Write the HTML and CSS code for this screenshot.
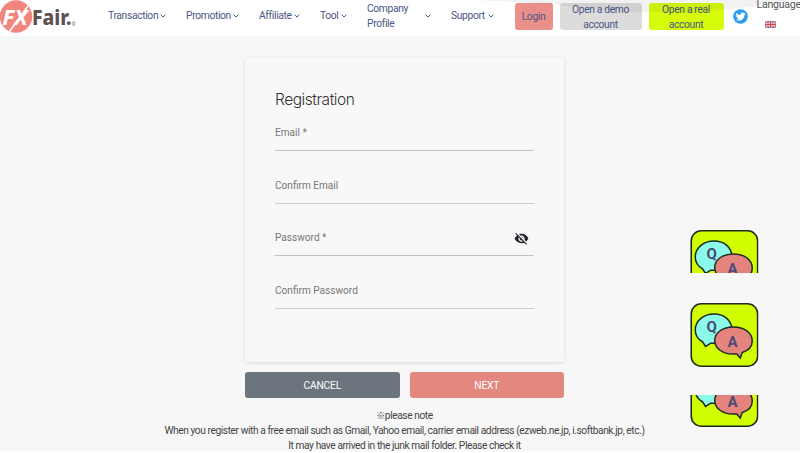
FILE: index.html
```
<!DOCTYPE html>
<html lang="en">
<head>
    <meta charset="UTF-8">
    <meta name="viewport" content="width=device-width, initial-scale=1.0">
    <title>Registration</title>
    <link rel="stylesheet" href="styles.css">
</head>
<body>
    <!-- shared icons -->
    <svg class="icon-defs" width="0" height="0">
        <symbol id="chevron" viewBox="0 0 6 4">
            <path d="M0.6 0.7 L3 3 L5.4 0.7" fill="none" stroke="currentColor" stroke-width="1"/>
        </symbol>
        <symbol id="qa" viewBox="0 0 68 64">
            <rect x="1" y="0.8" width="66.4" height="62.4" rx="10" fill="#d0fd00" stroke="#202b20" stroke-width="1.6"/>
            <path d="M24 11 C13 11 5 18 5 27 C5 32 8 36.5 12.5 39 L15.3 43.5 L20.5 40.2 C33 41 41.5 35 41.5 26.5 C41.5 17.5 34 11 24 11 Z" fill="#8cfae8" stroke="#202b28" stroke-width="1.5"/>
            <path d="M43 24 C32.5 24 24.5 29.5 24.5 37.5 C24.5 45.5 32.5 51 42.5 51 L46.5 51 L50 55 L52 49.5 C58.5 47.5 62 43.5 62 38 C62 29.8 54 24 43 24 Z" fill="#e5837d" stroke="#202b28" stroke-width="1.5"/>
            <text x="21.3" y="28.8" text-anchor="middle" class="qa-letter">Q</text>
            <text x="42.3" y="43.6" text-anchor="middle" class="qa-letter">A</text>
        </symbol>
    </svg>

    <header class="header">
        <svg class="logo" viewBox="0 0 78 33">
            <circle cx="16" cy="16.5" r="16.2" fill="#f3857f"/>
            <path d="M9.5 31.5 L28 6" fill="none" stroke="#fff" stroke-width="1.6"/>
            <text x="2.5" y="24.5" class="logo-fx" textLength="25" lengthAdjust="spacingAndGlyphs">FX</text>
            <text x="32" y="25" class="logo-fair" textLength="39.5" lengthAdjust="spacingAndGlyphs">Fair.</text>
            <text x="71.8" y="25.5" class="logo-copy">©</text>
        </svg>
        <nav class="nav">
            <a class="nav-item">Transaction <svg class="chevron"><use href="#chevron"/></svg></a>
            <a class="nav-item">Promotion <svg class="chevron"><use href="#chevron"/></svg></a>
            <a class="nav-item">Affiliate <svg class="chevron"><use href="#chevron"/></svg></a>
            <a class="nav-item">Tool <svg class="chevron"><use href="#chevron"/></svg></a>
            <a class="nav-item">Company<br>Profile <svg class="chevron"><use href="#chevron"/></svg></a>
            <a class="nav-item">Support <svg class="chevron"><use href="#chevron"/></svg></a>
        </nav>
        <div class="actions">
            <a class="btn btn-login">Login</a>
            <a class="btn btn-demo">Open a demo<br>account</a>
            <a class="btn btn-real">Open a real<br>account</a>
        </div>
        <svg class="twitter" viewBox="0 0 15 15">
            <circle cx="7.5" cy="7.5" r="7.3" fill="#2c9eed"/>
            <path transform="translate(2.7 2.7) scale(0.41)" fill="#fff" d="M23.95 4.57a10 10 0 0 1-2.82.77 4.96 4.96 0 0 0 2.16-2.72c-.95.55-2 .95-3.13 1.18a4.92 4.92 0 0 0-8.38 4.48A13.93 13.93 0 0 1 1.64 3.16a4.92 4.92 0 0 0 1.52 6.57 4.9 4.9 0 0 1-2.23-.61v.06a4.92 4.92 0 0 0 3.95 4.83 5 5 0 0 1-2.21.08 4.94 4.94 0 0 0 4.6 3.42A9.87 9.87 0 0 1 0 19.54a13.99 13.99 0 0 0 7.55 2.21c9.06 0 14-7.5 14-13.98l-.02-.63a9.94 9.94 0 0 0 2.42-2.57z"/>
        </svg>
        <div class="language">
            <span>Language</span>
            <svg class="flag" viewBox="0 0 11 7">
                <rect width="11" height="7" fill="#4c568f"/>
                <path d="M0 0 L11 7 M11 0 L0 7" stroke="#f1dce2" stroke-width="1.6"/>
                <path d="M0 0 L11 7 M11 0 L0 7" stroke="#d6505b" stroke-width="0.7"/>
                <path d="M5.5 0 V7 M0 3.5 H11" stroke="#f5e8eb" stroke-width="2.4"/>
                <path d="M5.5 0 V7 M0 3.5 H11" stroke="#d6434f" stroke-width="1.3"/>
            </svg>
        </div>
        <svg class="header-shade" viewBox="0 0 330 13">
            <path d="M0 0 H330 C290 5 263 12 185 12.5 C125 12 90 2 0 0 Z" fill="#000" fill-opacity="0.05"/>
        </svg>
    </header>

    <main class="main">
        <form class="card">
            <h2 class="title">Registration</h2>
            <div class="field"><label>Email *</label></div>
            <div class="field field-soft"><label>Confirm Email</label></div>
            <div class="field">
                <label>Password *</label>
                <svg class="eye" viewBox="0 0 24 24"><path fill="#212529" d="M12 7c2.76 0 5 2.24 5 5 0 .65-.13 1.26-.36 1.83l2.92 2.92c1.51-1.26 2.7-2.89 3.43-4.75-1.73-4.39-6-7.5-11-7.5-1.4 0-2.74.25-3.98.7l2.16 2.16C10.74 7.13 11.35 7 12 7zM2 4.27l2.28 2.28.46.46C3.08 8.3 1.78 10.02 1 12c1.73 4.39 6 7.5 11 7.5 1.55 0 3.03-.3 4.38-.84l.42.42L19.73 22 21 20.73 3.27 3 2 4.27zM7.53 9.8l1.55 1.55c-.05.21-.08.43-.08.65 0 1.66 1.34 3 3 3 .22 0 .44-.03.65-.08l1.55 1.55c-.67.33-1.41.53-2.2.53-2.76 0-5-2.24-5-5 0-.79.2-1.53.53-2.2zm4.31-.78l3.15 3.15.02-.16c0-1.66-1.34-3-3-3l-.17.01z"/></svg>
            </div>
            <div class="field field-soft"><label>Confirm Password</label></div>
        </form>
        <div class="form-buttons">
            <button type="button" class="form-btn cancel">CANCEL</button>
            <button type="button" class="form-btn next">NEXT</button>
        </div>
        <p class="note"><span class="note-mark">※</span>please note<br>When you register with a free email such as Gmail, Yahoo email, carrier email address (ezweb.ne.jp, i.softbank.jp, etc.)<br>It may have arrived in the junk mail folder. Please check it</p>
    </main>

    <!-- floating Q&A shortcuts -->
    <aside class="qa-list">
        <div class="qa qa-top"><svg class="qa-icon"><use href="#qa"/></svg></div>
        <div class="qa"><svg class="qa-icon"><use href="#qa"/></svg></div>
        <div class="qa qa-bottom"><svg class="qa-icon"><use href="#qa"/></svg></div>
    </aside>
</body>
</html>
```
FILE: styles.css
```
* {
    box-sizing: border-box;
}

body {
    margin: 0;
    height: 453px;
    overflow: hidden;
    background-color: #fff;
    font-family: Roboto, "Noto Sans CJK JP", sans-serif;
    font-size: 10.3px;
    line-height: 15px;
    letter-spacing: -0.35px;
    color: #444;
}

svg {
    display: block;
    flex: none;
}

.icon-defs {
    position: absolute;
}

/* Header */
.header {
    position: relative;
    display: flex;
    align-items: flex-start;
    height: 36px;
    background-color: #fff;
    color: #4b5685;
}

.logo {
    width: 78px;
    height: 33px;
    margin-right: 30px;
    overflow: visible;
}

.logo-fx {
    font: italic 700 22px "Open Sans", sans-serif;
    letter-spacing: 0;
    fill: #fff;
}

.logo-fair {
    font: 800 21.5px "Noto Sans", sans-serif;
    letter-spacing: 0;
    fill: #5e5150;
}

.logo-copy {
    font: 5px Roboto, sans-serif;
    letter-spacing: 0;
    fill: #5e5150;
}

.nav {
    display: grid;
    flex: none;
    grid-template-columns: 58px 53px 41px 27px 64px 43px;
    column-gap: 20px;
    height: 31px;
    width: 406.5px;
    align-items: center;
}

.nav-item {
    display: flex;
    align-items: center;
    justify-content: space-between;
}

.chevron {
    width: 6px;
    height: 4px;
}

.actions {
    display: flex;
    flex: none;
    gap: 7px;
    padding-top: 3px;
}

.btn {
    display: flex;
    align-items: center;
    justify-content: center;
    height: 27px;
    border-radius: 3px;
    text-align: center;
}

.btn-login {
    width: 38px;
    background-color: #eb8f8a;
}

.btn-demo {
    width: 82px;
    background-color: #dcdcdc;
}

.btn-real {
    width: 75px;
    background-color: #d6fc0c;
}

.twitter {
    width: 15px;
    height: 15px;
    margin: 9px 0 0 9px;
}

.language {
    display: flex;
    flex: none;
    flex-direction: column;
    gap: 9px;
    margin-left: 9px;
    margin-top: -3px;
    font-size: 10.5px;
    letter-spacing: -0.2px;
    color: #555;
}

.flag {
    width: 11px;
    height: 7px;
    margin-left: 8px;
}

/* curved shadow lying over the menu */
.header-shade {
    position: absolute;
    top: 0;
    left: 470px;
    width: 330px;
    height: 13px;
}

/* Form */
.main {
    display: flex;
    flex-direction: column;
    align-items: center;
    height: 415px;
    padding: 22px 0 0 9px;
    background-color: #f7f7f7;
}

.card {
    flex: none;
    width: 319px;
    height: 304px;
    padding: 31px 30px 0;
    border-radius: 2px;
    background-color: #f8f8f8;
    box-shadow: 0 1px 4px rgba(0, 0, 0, 0.12);
}

.title {
    margin: 0 0 14px;
    font-family: Inter, sans-serif;
    font-size: 15.5px;
    font-weight: 300;
    line-height: 22px;
    letter-spacing: -0.45px;
    color: #333;
}

.field {
    display: flex;
    justify-content: space-between;
    height: 26px;
    margin-bottom: 26.5px;
    border-bottom: 1px solid #c3c3c3;
    font-size: 10.1px;
    letter-spacing: 0;
    color: #777;
}

.field-soft {
    border-color: #cdcdcd;
}

.eye {
    width: 15px;
    height: 15px;
    margin: 1px 5px 0 0;
}

.form-buttons {
    display: flex;
    flex: none;
    gap: 10px;
    margin-top: 10px;
}

.form-btn {
    width: 154.5px;
    height: 26px;
    padding: 0;
    border: none;
    border-radius: 3px;
    font: inherit;
    letter-spacing: -0.25px;
    color: #fff;
}

.cancel {
    background-color: #6c757d;
}

.next {
    background-color: #e4877f;
}

.note {
    margin: 10px 0 0;
    font-size: 10.2px;
    letter-spacing: -0.42px;
    text-align: center;
    white-space: nowrap;
}

.note-mark {
    font-family: "Noto Sans CJK JP", sans-serif;
    font-size: 9px;
    line-height: 1;
}

/* Q&A */
.qa-list {
    position: absolute;
    top: 230px;
    left: 690px;
}

.qa {
    width: 68.5px;
    height: 64px;
    margin-bottom: 28px;
    overflow: hidden;
}

.qa-top {
    height: 43px;
    margin-bottom: 30px;
}

.qa-bottom {
    display: flex;
    align-items: flex-end;
    height: 32px;
}

.qa-icon {
    width: 68.5px;
    height: 64px;
}

.qa-letter {
    font: 700 15px Roboto, sans-serif;
    letter-spacing: 0;
    fill: #4b4b78;
}
```
